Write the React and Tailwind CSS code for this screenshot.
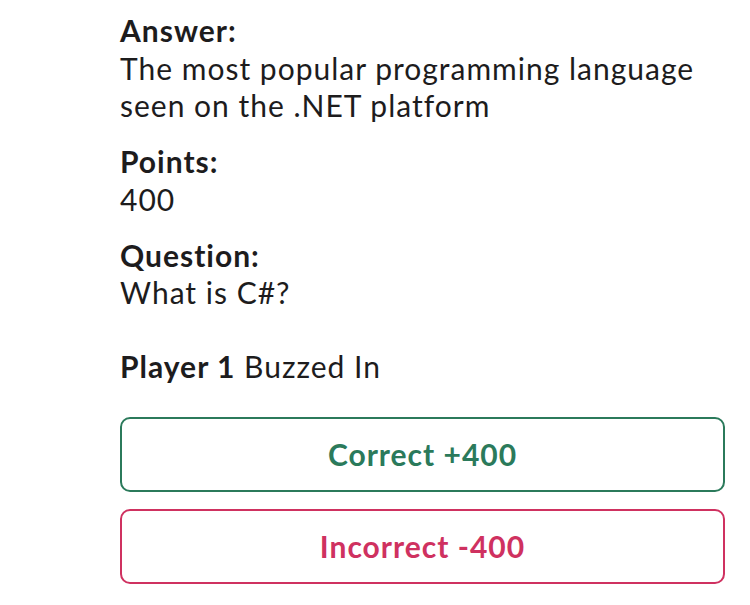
import React from 'react';

const Field = ({ label, children }) => (
  <div>
    <div className="font-bold">{label}</div>
    <div>{children}</div>
  </div>
);

const App = () => {
  return (
    <div
      className="min-h-screen bg-white text-[#1d1c1d] text-[30px] leading-[37.5px] tracking-[1px] pl-[120px] pr-[25px] pt-[12px]"
      style={{ fontFamily: 'Lato, "Noto Sans", sans-serif' }}
    >
      <div className="flex flex-col gap-[18.5px]">
        <Field label="Answer:">
          The most popular programming language
          <br />
          seen on the .NET platform
        </Field>
        <Field label="Points:">400</Field>
        <Field label="Question:">What is C#?</Field>
      </div>

      <div className="mt-[36px]">
        <span className="font-bold">Player 1</span> Buzzed In
      </div>

      {/* Actions */}
      <div className="mt-[32px] flex flex-col gap-[17px]">
        <button className="h-[75px] w-full rounded-[10px] border-2 border-[#2b7a5b] text-[#2b7a5b] font-bold">
          Correct +400
        </button>
        <button className="h-[75px] w-full rounded-[10px] border-2 border-[#cf3160] text-[#cf3160] font-bold">
          Incorrect -400
        </button>
      </div>
    </div>
  );
};

export default App;
